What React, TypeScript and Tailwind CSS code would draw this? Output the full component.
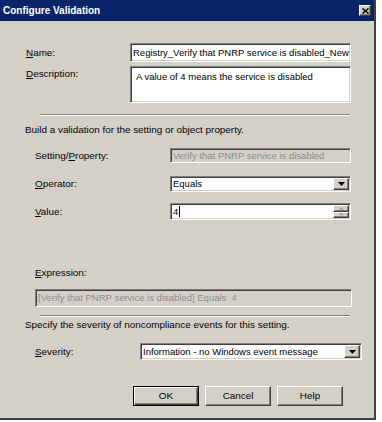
import React from "react";

const font = { fontFamily: '"Liberation Sans", Arial, sans-serif' };

const sunken =
  "border border-t-[#808080] border-l-[#808080] border-b-white border-r-white shadow-[inset_1px_1px_0_#404040,inset_-1px_-1px_0_#d4d0c8] text-[9.5px]";
const raised =
  "border border-t-white border-l-white border-b-[#404040] border-r-[#404040] shadow-[inset_-1px_-1px_0_#808080]";

function U({ c }: { c: string }) {
  return <span className="underline underline-offset-[1px]">{c}</span>;
}

function DropBtn() {
  return (
    <div className={`w-[16px] h-full shrink-0 bg-[#d4d0c8] flex items-center justify-center ${raised}`}>
      <svg width="7" height="4" viewBox="0 0 7 4">
        <path d="M0 0H7L3.5 4Z" fill="#000" />
      </svg>
    </div>
  );
}

function SpinBtn() {
  return (
    <div className="w-[16px] h-full shrink-0 flex flex-col">
      <div className={`flex-1 bg-[#d4d0c8] flex items-center justify-center ${raised}`}>
        <svg width="5" height="3" viewBox="0 0 5 3">
          <path d="M0 3H5L2.5 0Z" fill="#a0a0a0" />
        </svg>
      </div>
      <div className={`flex-1 bg-[#d4d0c8] flex items-center justify-center ${raised}`}>
        <svg width="5" height="3" viewBox="0 0 5 3">
          <path d="M0 0H5L2.5 3Z" fill="#a0a0a0" />
        </svg>
      </div>
    </div>
  );
}

export default function App() {
  return (
    <div className="w-[382px] h-[422px] bg-white text-[9.9px] text-black leading-[12px]" style={font}>
      <div className="w-[376px] h-[420px] bg-[#d4d0c8] border-r-2 border-b-2 border-r-[#404040] border-b-[#404040] flex flex-col">
        {/* title bar */}
        <div className="h-[21px] bg-[#0a246a] flex items-center justify-between pl-[3px] pr-[3px]">
          <span className="text-white font-bold text-[10px]">Configure Validation</span>
          <div className={`w-[12px] h-[11px] bg-[#d4d0c8] flex items-center justify-center ${raised}`}>
            <svg width="7" height="6" viewBox="0 0 7 6">
              <path d="M0.5 0.5L6.5 5.5M6.5 0.5L0.5 5.5" stroke="#000" strokeWidth="1.5" />
            </svg>
          </div>
        </div>

        {/* Name */}
        <div className="mt-[22px] flex items-center h-[19px]">
          <div className="pl-[26px] w-[130px]">
            <U c="N" />ame:
          </div>
          <div className={`w-[221px] h-full bg-white flex items-center px-[2px] whitespace-nowrap overflow-hidden ${sunken}`}>
            Registry_Verify that PNRP service is disabled_New
          </div>
        </div>

        {/* Description */}
        <div className="mt-[4px] flex h-[37px]">
          <div className="pl-[26px] w-[130px] pt-[2px]">
            <U c="D" />escription:
          </div>
          <div className={`w-[221px] h-full bg-white px-[5px] pt-[4px] ${sunken}`}>
            A value of 4 means the service is disabled
          </div>
        </div>

        {/* separator */}
        <div className="mt-[11px] ml-[40px] w-[310px] h-[2px] border-t border-t-[#808080] border-b border-b-white" />

        <div className="mt-[8px] pl-[25px]">Build a validation for the setting or object property.</div>

        {/* Setting/Property */}
        <div className="mt-[12px] flex items-center h-[15px]">
          <div className="pl-[35px] w-[170px]">
            Setting/<U c="P" />roperty:
          </div>
          <div className={`w-[181px] h-full bg-[#d4d0c8] flex items-center px-[2px] text-[#8c8c8c] whitespace-nowrap overflow-hidden ${sunken}`}>
            Verify that PNRP service is disabled
          </div>
        </div>

        {/* Operator */}
        <div className="mt-[13px] flex items-center h-[16px]">
          <div className="pl-[35px] w-[170px]">
            <U c="O" />perator:
          </div>
          <div className={`w-[181px] h-full bg-white flex items-center justify-between pl-[2px] pr-[1px] py-[1px] ${sunken}`}>
            <span>Equals</span>
            <DropBtn />
          </div>
        </div>

        {/* Value */}
        <div className="mt-[11px] flex items-center h-[17px]">
          <div className="pl-[35px] w-[170px]">
            <U c="V" />alue:
          </div>
          <div className={`w-[181px] h-full bg-white flex items-center justify-between pl-[2px] pr-[1px] py-[1px] ${sunken}`}>
            <span className="flex items-center">
              4<span className="inline-block w-[1px] h-[11px] bg-black ml-[1px]" />
            </span>
            <SpinBtn />
          </div>
        </div>

        {/* Expression */}
        <div className="mt-[47px] pl-[35px]">
          <U c="E" />xpression:
        </div>
        <div className={`mt-[10px] ml-[35px] w-[317px] h-[18px] bg-[#d4d0c8] flex items-center px-[2px] text-[#8c8c8c] whitespace-nowrap ${sunken}`}>
          [Verify that PNRP service is disabled] Equals&nbsp;&nbsp;4
        </div>

        {/* separator */}
        <div className="mt-[8px] ml-[40px] w-[310px] h-[2px] border-t border-t-[#808080] border-b border-b-white" />

        <div className="mt-[2px] pl-[25px]">Specify the severity of noncompliance events for this setting.</div>

        {/* Severity */}
        <div className="mt-[12px] flex items-center h-[17px]">
          <div className="pl-[35px] w-[140px]">
            <U c="S" />everity:
          </div>
          <div className={`w-[222px] h-full bg-white flex items-center justify-between pl-[2px] pr-[1px] py-[1px] ${sunken}`}>
            <span className="whitespace-nowrap">Information - no Windows event message</span>
            <DropBtn />
          </div>
        </div>

        {/* Buttons */}
        <div className="mt-[26px] flex pl-[133px] gap-[6px]">
          <div className="w-[66px] h-[20px] border border-black">
            <div className={`w-full h-full bg-[#d4d0c8] flex items-center justify-center ${raised}`}>OK</div>
          </div>
          <div className={`w-[66px] h-[20px] bg-[#d4d0c8] flex items-center justify-center ${raised}`}>Cancel</div>
          <div className={`w-[66px] h-[20px] bg-[#d4d0c8] flex items-center justify-center ${raised}`}>Help</div>
        </div>
      </div>
    </div>
  );
}
